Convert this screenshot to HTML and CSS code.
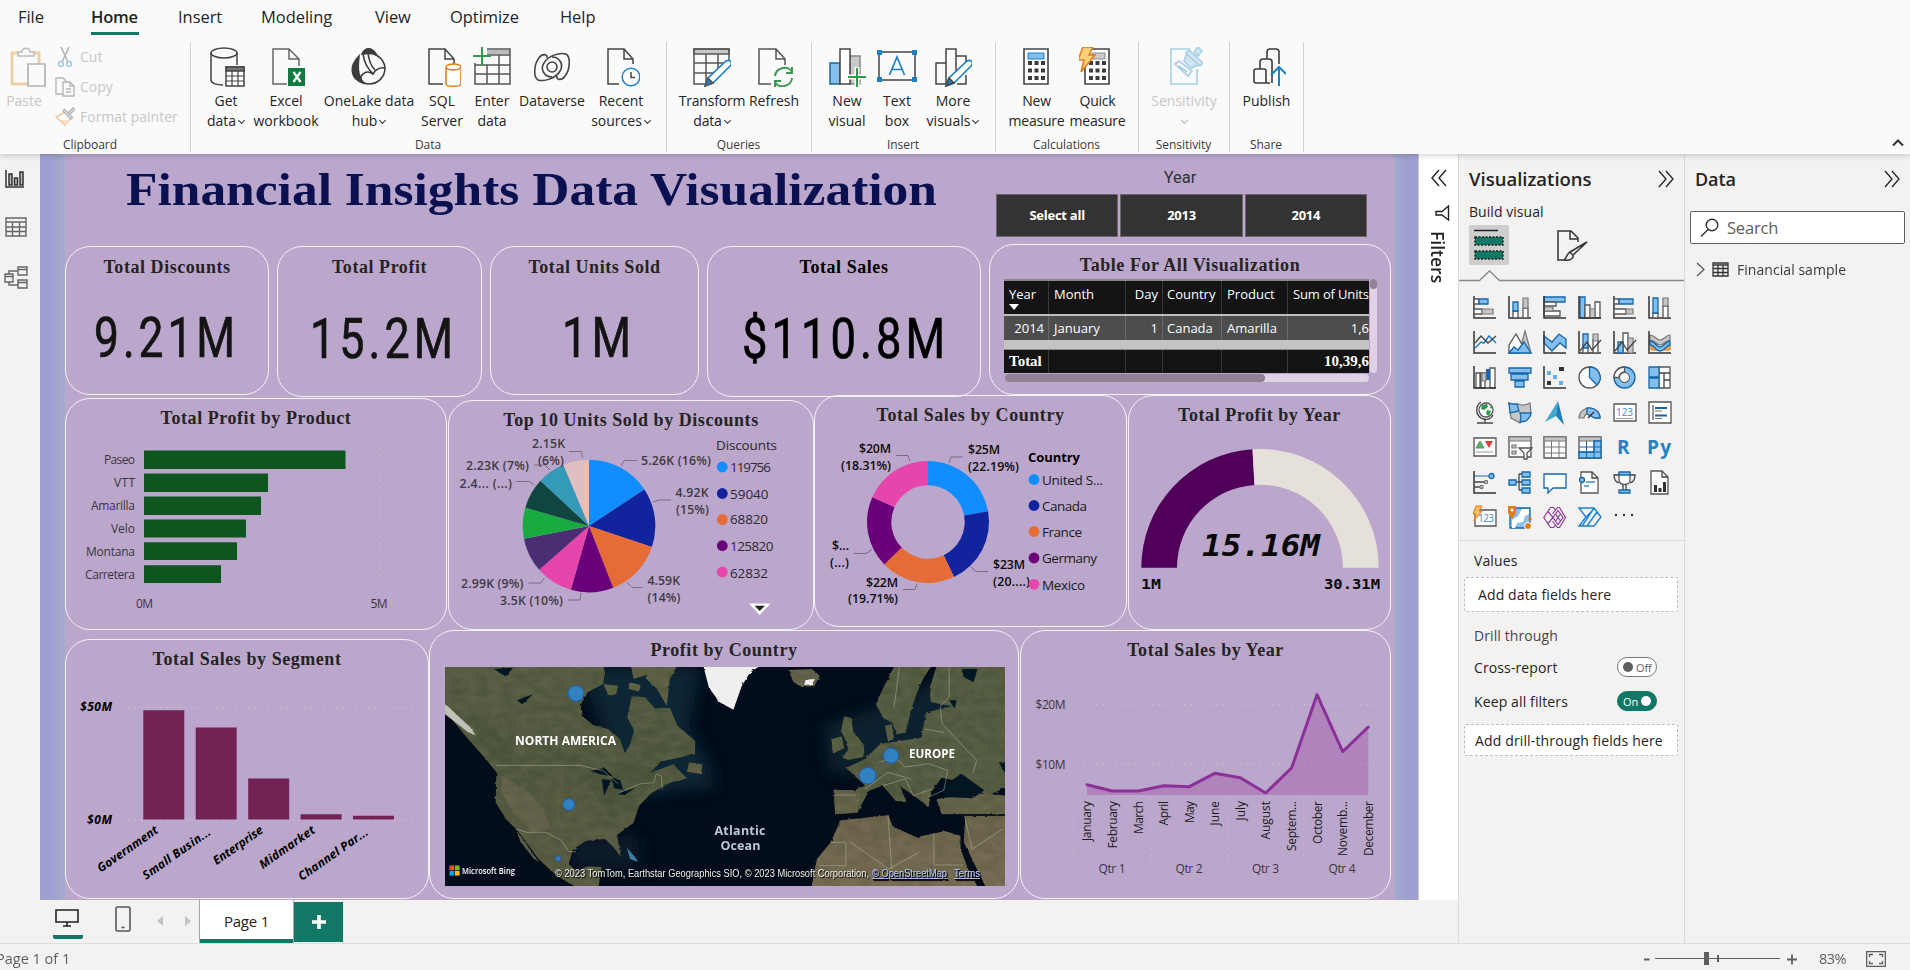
FILE: index.html
```html
<!DOCTYPE html>
<html lang="en">
<head>
<meta charset="utf-8">
<title>Financial Insights</title>
<link rel="stylesheet" href="styles.css">
</head>
<body>
<div class="app">
  <header class="ribbon">
    <nav class="tabs">
      <a class="tab t-file">File</a><a class="tab t-home on">Home</a><a class="tab t-insert">Insert</a><a class="tab t-model">Modeling</a><a class="tab t-view">View</a><a class="tab t-opt">Optimize</a><a class="tab t-help">Help</a>
    </nav>
    <div class="groups">
      <section class="group g-clip">
        <div class="tools clip">
          <div class="btn w-paste off"><svg class="ic" width="38" height="40" viewBox="0 0 38 40" fill="none"><path d="M4 6h27v31H4z" stroke="#efcfa6" stroke-width="3"/><path d="M10 9V5h4c0-5 8-5 8 0h4v4z" fill="#fafafa" stroke="#bdbdbd" stroke-width="1.6"/><path d="M20 17h17v22H20z" fill="#fafafa" stroke="#b4b4b4" stroke-width="1.7"/></svg><span>Paste</span></div>
          <div class="minis off">
            <div class="mini"><svg width="20" height="20" viewBox="0 0 20 20" fill="none"><path d="M6 0l7 15M14 0L7 15" stroke="#b4b4b4" stroke-width="1.6"/><circle cx="6" cy="17" r="2.4" stroke="#9cc9e4" stroke-width="1.5"/><circle cx="14" cy="17" r="2.4" stroke="#9cc9e4" stroke-width="1.5"/></svg><span>Cut</span></div>
            <div class="mini"><svg width="20" height="20" viewBox="0 0 20 20" fill="none" stroke="#b4b4b4" stroke-width="1.3"><path d="M8 17H1V1h7l3 3"/><path d="M8 5h7l4 4v10H8z" fill="#fafafa"/><path d="M15 5v4h4M11 12h5M11 15h5"/></svg><span>Copy</span></div>
            <div class="mini"><svg width="20" height="20" viewBox="0 0 20 20" fill="none"><path d="M1 10l9 8 6-7-6-6z" stroke="#efc9a0" stroke-width="1.6"/><path d="M6 13l5 5 4-5z" fill="#f8dfc0"/><path d="M8 4l8 8 1.500-1.500L9.500 2.500zM13 6l5-5 1.500 1.500-5 5" stroke="#b0b0b0" stroke-width="1.3" fill="#fafafa"/></svg><span class="fp">Format painter</span></div>
          </div>
        </div>
        <div class="gl">Clipboard</div>
      </section>
      <section class="group g-data">
        <div class="tools">
          <div class="btn w52"><svg class="ic" width="38" height="40" viewBox="0 0 38 40" fill="none" stroke="#444" stroke-width="1.5"><ellipse cx="17" cy="6" rx="13" ry="5"/><path d="M4 6v27c0 3 5 5 12 5M30 6v12"/><path d="M19 20h18v19H19z" fill="#fff"/><path d="M19 20h18v4H19z" fill="#777"/><path d="M19 29h18M19 34h18M25 24v15M31 24v15" stroke-width="1.200"/></svg><span>Get<br>data<i class="dn"></i></span></div>
          <div class="btn w68"><svg class="ic" width="38" height="40" viewBox="0 0 38 40" fill="none" stroke="#666" stroke-width="1.5"><path d="M20 37H6V2h16l10 10v7M22 2v10h10"/><path d="M21 21h17v18H21z" fill="#107c41" stroke="none"/><path d="M26.500 25l7 10M33.500 25l-7 10" stroke="#fff" stroke-width="2.200"/></svg><span>Excel<br>workbook</span></div>
          <div class="btn w98"><svg class="ic" width="38" height="40" viewBox="0 0 38 40" fill="none" stroke="#3c3c3c" stroke-width="1.600"><path d="M9 9C-1 19 0 32 13 36c-6-9-5-18-4-27z" fill="#3c3c3c"/><path d="M12 7c3-7 10-7 14 0-4-1-9-1-14 0z" fill="#3c3c3c"/><path d="M13 7c10-3 21 3 22 14M13 7c1 8 4 14 10 20 3-5 7-7 12-6 0 9-7 16-16 16-8 0-10-7-6-10 3-3 7-2 10 0M18 6c1 9 5 15 7 17"/></svg><span>OneLake data<br>hub<i class="dn"></i></span></div>
          <div class="btn w48"><svg class="ic" width="38" height="40" viewBox="0 0 38 40" fill="none" stroke="#444" stroke-width="1.500"><path d="M20 37H6V2h16l9 10v5M22 2v10h9"/><path d="M23 21v16c0 3 15 3 15 0V21" fill="#fff" stroke="#e07b1a"/><ellipse cx="30.500" cy="20" rx="7.500" ry="3" fill="#fff" stroke="#e07b1a"/></svg><span>SQL<br>Server</span></div>
          <div class="btn w52"><svg class="ic" width="38" height="40" viewBox="0 0 38 40" fill="none" stroke="#555" stroke-width="1.500"><path d="M14 3h23v4H14z" fill="#bbb" stroke="none"/><path d="M14 2h23v35H2V16M2 18h35M2 27h35M14 18v19M26 8v29M14 8h23"/><path d="M9 0v19M0 9h18" stroke="#2f9a49" stroke-width="2"/></svg><span>Enter<br>data</span></div>
          <div class="btn w68"><svg class="ic" width="38" height="40" viewBox="0 0 38 40" fill="none" stroke="#444" stroke-width="1.600"><circle cx="19" cy="20" r="5"/><path d="M19 30c-8 0-12-8-8-14C15 9 26 5 33 7c5 3 4 16-1 22-3 5-9 4-8 0M19 10c8 0 12 8 8 14C23 31 12 35 5 33 0 30 1 17 6 11c3-5 9-4 8 0"/></svg><span>Dataverse</span></div>
          <div class="btn w70"><svg class="ic" width="38" height="40" viewBox="0 0 38 40" fill="none" stroke="#444" stroke-width="1.500"><path d="M17 37H6V2h16l9 10v5M22 2v10h9"/><circle cx="29" cy="30" r="8.800" fill="#fff" stroke="#1f82cc"/><path d="M29 25v5.500h4"/></svg><span>Recent<br>sources<i class="dn"></i></span></div>
        </div>
        <div class="gl">Data</div>
      </section>
      <section class="group g-query">
        <div class="tools">
          <div class="btn w66"><svg class="ic" width="38" height="40" viewBox="0 0 38 40" fill="none" stroke="#555" stroke-width="1.500"><path d="M1 2h35v5H1z" fill="#c8c8c8"/><path d="M14 37H1V2h35v11M1 16h30M1 26h22M13 7v30M25 7v14"/><path d="M12 39l3-8 18-17c4-2 7 2 4 5L20 36z" fill="#fff" stroke="#1b80c8" stroke-width="1.600"/><path d="M12 39l3-8 5 5z" fill="#1b80c8"/></svg><span>Transform<br>data<i class="dn"></i></span></div>
          <div class="btn w58"><svg class="ic" width="38" height="40" viewBox="0 0 38 40" fill="none" stroke="#555" stroke-width="1.500"><path d="M16 37H4V2h17l9 10v6M21 2v10h9"/><path d="M20 29c1-9 14-11 17-4M37 20v6h-6M37 31c-1 9-14 11-17 4M20 40v-6h6" stroke="#3a9a52" stroke-width="2"/></svg><span>Refresh</span></div>
        </div>
        <div class="gl">Queries</div>
      </section>
      <section class="group g-insert">
        <div class="tools">
          <div class="btn w50"><svg class="ic wide" width="38" height="40" viewBox="0 0 38 40" fill="none" stroke="#444" stroke-width="1.500"><path d="M22 9h10v28H22z" fill="#c8c8c8" stroke="#888"/><path d="M2 16h10v21H2z" fill="#83beec" stroke="#1668ad"/><path d="M12 2h10v35H12z" fill="#fff"/><path d="M29 20v20M20 30h18" stroke="#fafafa" stroke-width="5"/><path d="M29 21v19M20 30h18" stroke="#2f9a49" stroke-width="2"/></svg><span>New<br>visual</span></div>
          <div class="btn w50"><svg class="ic" width="40" height="40" viewBox="0 0 40 40" fill="none"><path d="M2 5h36v28H2z" stroke="#444" stroke-width="1.500"/><path d="M0 3h5v5H0zM35 3h5v5h-5zM0 30h5v5H0zM35 30h5v5h-5z" fill="#1b80c8"/><path d="M12.500 28L20 10l7.500 18M15 22.500h10" stroke="#1b80c8" stroke-width="1.700"/></svg><span>Text<br>box</span></div>
          <div class="btn w62"><svg class="ic" width="38" height="40" viewBox="0 0 38 40" fill="none" stroke="#444" stroke-width="1.500"><path d="M12 37H2V16h10M12 37V2h10v22M22 9h10v6M32 28v9h-9"/><path d="M12 39l3-8 18-17c4-2 7 2 4 5L20 36z" fill="#fff" stroke="#1b80c8" stroke-width="1.600"/><path d="M12 39l3-8 5 5z" fill="#1b80c8"/></svg><span>More<br>visuals<i class="dn"></i></span></div>
        </div>
        <div class="gl">Insert</div>
      </section>
      <section class="group g-calc">
        <div class="tools">
          <div class="btn w61"><svg class="ic" width="38" height="40" viewBox="0 0 38 40" fill="none"><path d="M6 2h24v35H6z" fill="#fff" stroke="#444" stroke-width="1.600"/><path d="M10 6h16v6H10z" fill="#83beec" stroke="#1b80c8"/><path d="M10 16h17M10 23.500h17M10 31h17" stroke="#3c3c3c" stroke-width="3.800" stroke-dasharray="4 2.500"/></svg><span>New<br>measure</span></div>
          <div class="btn w61"><svg class="ic" width="38" height="40" viewBox="0 0 38 40" fill="none"><path d="M6 2h24v35H6z" fill="#fff" stroke="#444" stroke-width="1.600"/><path d="M13 6h13v6H13z" fill="#ccc" stroke="#888"/><path d="M10 16h17M10 23.500h17M10 31h17" stroke="#3c3c3c" stroke-width="3.800" stroke-dasharray="4 2.500"/><path d="M4 0h10l-4 8h6L2 25l3-12H-1z" fill="#fcd07b" stroke="#e07b1a" stroke-width="1.500"/></svg><span>Quick<br>measure</span></div>
        </div>
        <div class="gl">Calculations</div>
      </section>
      <section class="group g-sens">
        <div class="tools">
          <div class="btn w74 off"><svg class="ic" width="38" height="40" viewBox="0 0 38 40" fill="none" stroke="#a8cfe6" stroke-width="1.600"><path d="M25 2H6v35h26V22"/><path d="M24 3l14 13-3 3L21 6zM33 0l4 4-4 5-4-4zM22 6l-3 8 7 7 8-3" fill="#cfe5f2"/><path d="M10 17l4-3 13 10-4 5zM14 19l8 6"/></svg><span>Sensitivity<br><i class="dn lone"></i></span></div>
        </div>
        <div class="gl">Sensitivity</div>
      </section>
      <section class="group g-share">
        <div class="tools">
          <div class="btn w74"><svg class="ic" width="38" height="40" viewBox="0 0 38 40" fill="none" stroke="#3c3c3c" stroke-width="1.600"><path d="M22 36H8c-1 0-2-1-2-2V24c0-1 1-2 2-2h8c1 0 2 1 2 2v12M12 22v-7c0-2 1-3 3-3h6c2 0 3 1 3 3v21M19 12V5c0-2 1-3 3-3h6c2 0 3 1 3 3v12"/><path d="M31 39V20M23 28l8-8 7 7" stroke="#1b80c8" stroke-width="2"/></svg><span>Publish</span></div>
        </div>
        <div class="gl">Share</div>
      </section>
      <div class="collapse"><svg width="12" height="8" viewBox="0 0 12 8" fill="none" stroke="#333" stroke-width="2"><path d="M1 6.500L6 1.500l5 5"/></svg></div>
    </div>
  </header>

  <div class="main">
    <div class="left">
      <div class="workrow">
        <aside class="rail">
          <svg width="20" height="18" viewBox="0 0 20 18" fill="none" stroke="#333" stroke-width="1.500"><path d="M1 0v17h18"/><path d="M4 15V4h3v11zM9.500 15V8h3v7zM15 15V2h3v13z" fill="#bbb"/></svg>
          <svg width="22" height="20" viewBox="0 0 22 20" fill="none" stroke="#666" stroke-width="1.400"><path d="M1 1h20v18H1zM1 5h20M1 10h20M1 14.500h20M7.500 5v14M14.500 5v14"/></svg>
          <svg width="24" height="24" viewBox="0 0 24 24" fill="none" stroke="#666" stroke-width="1.400"><path d="M14 1h9v8h-9zM14 3.500h9M1 8h8v8H1zM1 10.500h8M14 14h9v8h-9zM14 16.500h9M5 8V5h9M5 16v3h9"/></svg>
        </aside>
        <main class="canvas">
          <div class="head">
            <svg class="title" width="830" height="64" viewBox="120 158 830 64"><text class="ttl" x="126" y="205" textLength="811" lengthAdjust="spacingAndGlyphs">Financial Insights Data Visualization</text></svg>
            <div class="slicer"><div class="sl-h">Year</div><div class="sl-b"><b>Select all</b><b>2013</b><b>2014</b></div></div>
          </div>
          <div class="row row1">
            <section class="card c1"><h3>Total Discounts</h3><svg width="202" height="100" viewBox="66 279 202 100"><text class="big" x="94" y="357" textLength="145" lengthAdjust="spacingAndGlyphs">9.21M</text></svg></section>
            <section class="card c2"><h3>Total Profit</h3><svg width="203" height="100" viewBox="278 279 203 100"><text class="big" x="310" y="358" textLength="147" lengthAdjust="spacingAndGlyphs">15.2M</text></svg></section>
            <section class="card c3"><h3>Total Units Sold</h3><svg width="207" height="100" viewBox="491 279 207 100"><text class="big" x="562" y="357" textLength="73" lengthAdjust="spacingAndGlyphs">1M</text></svg></section>
            <section class="card c4"><h3 class="blk">Total Sales</h3><svg width="272" height="100" viewBox="708 279 272 100"><text class="big blk" x="742" y="358" textLength="207" lengthAdjust="spacingAndGlyphs">$110.8M</text></svg></section>
            <section class="card c5"><h3>Table For All Visualization</h3>
              <div class="tblwrap">
                <div class="tbl">
                  <div class="tr th"><span>Year<i class="sort"></i></span><span>Month</span><span class="r">Day</span><span>Country</span><span>Product</span><span class="nb">Sum of Units</span></div>
                  <div class="tr td"><span class="r">2014</span><span>January</span><span class="r">1</span><span>Canada</span><span>Amarilla</span><span class="cut">1,6</span></div>
                  <div class="gap"></div>
                  <div class="tr tt"><span>Total</span><span></span><span></span><span></span><span></span><span class="cut">10,39,6</span></div>
                </div>
                <div class="vbar"><i></i></div>
              </div>
              <div class="hbar"><i></i></div>
            </section>
          </div>
          <div class="row row2">
            <section class="card d1"><h3>Total Profit by Product</h3>
              <svg width="380" height="196" viewBox="66 431 380 196" class="ax">
                <path class="grid" d="M144.500 442V594M379.500 442V594"/>
                <g fill="#0f5520"><path d="M144 450.500h201.500V469H144zM144 473.500h124V492H144zM144 496.500h117V515H144zM144 519.500h102V537.500H144zM144 542.300h93V560H144zM144 565.200h77V583H144z"/></g>
                <g text-anchor="end"><text x="135" y="464" textLength="31">Paseo</text><text x="135" y="487" textLength="21">VTT</text><text x="135" y="510" textLength="44">Amarilla</text><text x="135" y="533" textLength="24">Velo</text><text x="135" y="555.500" textLength="49">Montana</text><text x="135" y="578.500" textLength="50">Carretera</text></g>
                <g text-anchor="middle"><text x="144.500" y="608" textLength="17">0M</text><text x="379" y="608" textLength="17">5M</text></g>
              </svg></section>
            <section class="card d2"><h3>Top 10 Units Sold by Discounts</h3>
              <svg width="364" height="194" viewBox="449 434 364 194" class="pl">
                <path fill="#118dff" d="M589 527V460.700A66.300 66.300 0 0 1 644.400 490.500z"/><path fill="#12239e" d="M589 527L644.400 490.500A66.300 66.300 0 0 1 651.900 548z"/><path fill="#e66c37" d="M589 527L651.900 548A66.300 66.300 0 0 1 613.200 588.700z"/><path fill="#6b007b" d="M589 527L613.200 588.700A66.300 66.300 0 0 1 570.800 590.800z"/><path fill="#e645ab" d="M589 527L570.800 590.800A66.300 66.300 0 0 1 539.200 570.800z"/><path fill="#4b2d73" d="M589 527L539.200 570.800A66.300 66.300 0 0 1 523.900 539.700z"/><path fill="#1aab40" d="M589 527L523.900 539.700A66.300 66.300 0 0 1 525.300 508.600z"/><path fill="#114540" d="M589 527L525.300 508.600A66.300 66.300 0 0 1 540.500 481.800z"/><path fill="#3599b8" d="M589 527L540.500 481.800A66.300 66.300 0 0 1 563.400 465.800z"/><path fill="#dfbfbf" d="M589 527L563.400 465.800A66.300 66.300 0 0 1 589 460.700z"/>
                <path class="lead" d="M569 452.500h12.500l1 6M534 466h11l5 5M516.500 482.500h13l4.500 3.500M528.500 584h12l4-5M568 601h12l1-7M637 461.500h-13l-3 5.500M671 501h-12l-6 2M643 588.500h-11l-5-5"/>
                <text x="532" y="449" textLength="33">2.15K</text><text x="538" y="466" textLength="26">(6%)</text><text x="466" y="471" textLength="63">2.23K (7%)</text><text x="459.500" y="488.500" textLength="52.500">2.4... (...)</text><text x="461" y="589" textLength="62.500">2.99K (9%)</text><text x="500" y="606" textLength="63">3.5K (10%)</text><text x="641" y="466" textLength="70">5.26K (16%)</text><text x="675.500" y="498" textLength="33">4.92K</text><text x="676" y="514.500" textLength="33">(15%)</text><text x="647.500" y="586" textLength="32.500">4.59K</text><text x="647.500" y="602.500" textLength="33">(14%)</text>
                <circle cx="722.300" cy="468" r="5.400" fill="#118dff"/><circle cx="722.300" cy="494.500" r="5.400" fill="#12239e"/><circle cx="722.300" cy="520.500" r="5.400" fill="#e66c37"/><circle cx="722.300" cy="546.700" r="5.400" fill="#6b007b"/><circle cx="722.300" cy="573" r="5.400" fill="#e645ab"/>
                <g class="lg"><text x="716" y="451" textLength="61">Discounts</text><text x="730" y="473" textLength="41">119756</text><text x="730" y="500" textLength="38.500">59040</text><text x="730" y="525" textLength="38">68820</text><text x="730" y="552" textLength="43.500">125820</text><text x="730" y="579" textLength="38">62832</text></g>
                <path d="M749 604.500h21.500L759.700 616z" fill="#fff"/><path d="M754.500 606.700h10.500L759.700 612z" fill="#222"/>
              </svg></section>
            <section class="card d3"><h3>Total Sales by Country</h3>
              <svg width="311" height="196" viewBox="815 429 311 196" class="pl dk">
                <path fill="#118dff" d="M928 462A61 61 0 0 1 988.100 512.300L964.100 516.600A36.700 36.700 0 0 0 928 486.300z"/><path fill="#12239e" d="M988.100 512.300A61 61 0 0 1 954 578.100L943.700 556.200A36.700 36.700 0 0 0 964.100 516.600z"/><path fill="#e66c37" d="M954 578.100A61 61 0 0 1 884.300 565.500L901.700 548.600A36.700 36.700 0 0 0 943.700 556.200z"/><path fill="#6b007b" d="M884.300 565.500A61 61 0 0 1 872.300 498.200L894.500 508.100A36.700 36.700 0 0 0 901.700 548.600z"/><path fill="#e645ab" d="M872.300 498.200A61 61 0 0 1 928 462L928 486.300A36.700 36.700 0 0 0 894.500 508.100z"/>
                <path class="lead" d="M896 456.500h12l2 6M963 458h-12l-2 6M854 554.500h12l6-4M903 590.500h12l2-6M988 572.500h-12l-5-4.500"/>
                <text x="859" y="454" textLength="32">$20M</text><text x="841" y="470.500" textLength="50">(18.31%)</text><text x="968" y="455" textLength="32">$25M</text><text x="968" y="472" textLength="51">(22.19%)</text><text x="832" y="551" textLength="17">$...</text><text x="830" y="568" textLength="19">(...)</text><text x="866" y="588" textLength="32">$22M</text><text x="848" y="604" textLength="50">(19.71%)</text><text x="993" y="570" textLength="32">$23M</text><text x="993" y="586.500" textLength="37">(20....)</text>
                <circle cx="1034" cy="480.500" r="5.400" fill="#118dff"/><circle cx="1034" cy="506.500" r="5.400" fill="#12239e"/><circle cx="1034" cy="532.500" r="5.400" fill="#e66c37"/><circle cx="1034" cy="559" r="5.400" fill="#6b007b"/><circle cx="1034" cy="585.300" r="5.400" fill="#e645ab"/>
                <g class="lg"><text class="b" x="1028" y="463" textLength="52">Country</text><text x="1042" y="486" textLength="61">United S...</text><text x="1042" y="512" textLength="45">Canada</text><text x="1042" y="538" textLength="40">France</text><text x="1042" y="564" textLength="55">Germany</text><text x="1042" y="591" textLength="43">Mexico</text></g>
              </svg></section>
            <section class="card d4"><h3>Total Profit by Year</h3>
              <svg width="261" height="198" viewBox="1129 429 261 198" class="mono">
                <path fill="#500058" d="M1141.300 568.700A118.700 118.700 0 0 1 1252.500 450.200L1254.500 485.900A83 83 0 0 0 1177 568.700z"/><path fill="#e6e0da" d="M1252.500 450.200A118.700 118.700 0 0 1 1378.700 568.700H1343A83 83 0 0 0 1254.500 485.900z"/>
                <text class="val" x="1202" y="557" textLength="118" lengthAdjust="spacingAndGlyphs">15.16M</text><text x="1141" y="590" textLength="20" lengthAdjust="spacingAndGlyphs">1M</text><text x="1324" y="590" textLength="56" lengthAdjust="spacingAndGlyphs">30.31M</text>
              </svg></section>
          </div>
          <div class="row row3">
            <section class="card e1"><h3>Total Sales by Segment</h3>
              <svg width="362" height="224" viewBox="66 672 362 224" class="seg">
                <path class="grid" d="M122 707.500H418M122 820H418"/>
                <path fill="#732256" d="M143.300 710.300h41V819.500h-41zM195.700 727.500h41V819.500h-41zM248.200 778.500h41V819.500h-41zM300.600 814.200h41V819.500h-41zM353 815.700h41V819.500h-41z"/>
                <text x="80" y="711" textLength="32">$50M</text><text x="87" y="824" textLength="25">$0M</text>
                <g text-anchor="end"><text transform="translate(159 832) rotate(-35)" textLength="71">Government</text><text transform="translate(211.500 834) rotate(-35)" textLength="80">Small Busin...</text><text transform="translate(264 832) rotate(-35)" textLength="58">Enterprise</text><text transform="translate(316 832) rotate(-35)" textLength="65">Midmarket</text><text transform="translate(369 834) rotate(-35)" textLength="82">Channel Par...</text></g>
              </svg></section>
            <section class="card e2"><h3>Profit by Country</h3>
              <svg class="map" width="560" height="219" viewBox="445 668 560 219">
                <defs>
                  <filter id="tex" x="0" y="0" width="100%" height="100%" color-interpolation-filters="sRGB"><feTurbulence type="fractalNoise" baseFrequency=".03 .04" numOctaves="6" seed="8" result="n"/><feColorMatrix in="n" type="matrix" values=".22 0 0 0 .23 .17 .04 0 0 .245 .18 0 .04 0 .135 0 0 0 0 1" result="g"/><feComposite in="SourceGraphic" in2="g" operator="arithmetic" k1="0" k2=".6" k3=".42" k4="0" result="c"/><feComposite in="c" in2="SourceGraphic" operator="in"/></filter>
                  <filter id="soft" x="-30%" y="-30%" width="160%" height="160%"><feGaussianBlur stdDeviation="22"/></filter>
                  <filter id="edge" x="-10%" y="-10%" width="120%" height="120%"><feTurbulence type="fractalNoise" baseFrequency=".07" numOctaves="3" seed="2"/><feDisplacementMap in="SourceGraphic" scale="7"/></filter>
                  <linearGradient id="na" x1="0" y1="0" x2=".15" y2="1"><stop offset="0" stop-color="#545a45"/><stop offset=".5" stop-color="#4a553b"/><stop offset="1" stop-color="#555a42"/></linearGradient>
                  <linearGradient id="af" x1="0" y1="0" x2="0" y2="1"><stop offset="0" stop-color="#736650"/><stop offset="1" stop-color="#84735c"/></linearGradient>
                </defs>
                <svg x="445" y="668" width="560" height="219" viewBox="52 114 1464 657" preserveAspectRatio="none">
                  <rect x="52" y="114" width="1464" height="657" fill="#020c1a"/>
                  <g fill="#0b2634" filter="url(#soft)"><path d="M400 114H720L690 300 740 400 760 480 690 480 560 500 500 400z"/><path d="M1040 290L1230 220 1400 114 1450 250 1250 400 1060 440z" opacity=".8"/><path d="M380 620h180v100H380z" opacity=".6"/></g>
                  <g filter="url(#edge)"><g filter="url(#tex)">
                    <path fill="url(#na)" d="M40 100H472L466 165 425 190 408 225 412 262 440 288 478 300 510 330 522 372 536 345 546 305 528 265 540 200 575 205 600 238 640 236 660 290 706 335 706 372 670 385 615 398 588 432 650 404 660 420 685 448 640 462 592 492 560 530 545 582 502 618 512 684 490 652 470 630 420 636 386 662 376 706 396 726 426 712 462 714 452 785H410L345 742 296 690 240 602 212 572 184 520 186 430 160 392 112 330 40 230z"/>
                    <path fill="#5c5f43" d="M236 600L262 640 298 700 284 690 250 640zM535 100H600L592 134 545 150zM585 100H664L640 150 632 232 606 180 578 150zM466 165L505 170 500 195 480 202zM690 400L725 405 722 436 684 428zM535 160l30 8-6 20-28-8z"/>
                    <path fill="#66624f" d="M950 122L1012 120 1032 140 1018 172 984 174 962 158z"/>
                    <path fill="#4f5a3c" d="M1095 262l20 5 4 40 28 40 2 36-42 10-16-6 16-30-6-20-14-30zM1062 330l28-8 6 36-30 16z"/>
                    <path fill="#4e5940" d="M1232 100H1330L1302 150 1290 180 1274 232 1256 312 1232 316 1222 282 1198 268 1178 226 1200 170zM1202 290l18-6 6 42-16 14zM1340 100H1530V470L1470 500 1410 462 1350 446 1330 480 1300 520 1240 470 1260 520 1230 516 1196 470 1160 486 1130 552 1072 556 1068 482 1120 484 1150 470 1100 416 1150 390 1190 344 1296 326 1310 250 1376 232 1322 220 1318 180z"/>
                    <path fill="#66644c" d="M1296 486l28 0-8 50-16-18zM1336 510L1440 492 1530 500V556L1350 556zM1068 484h70l-8 66-58 6z"/>
                    <path fill="url(#af)" d="M1086 574L1212 558 1222 592 1284 624 1360 606 1400 620 1400 660 1420 720 1450 785H1008L1024 690 1060 640zM1412 560H1530V785H1470L1408 640z"/>
                    <path fill="#7a6b58" opacity=".6" d="M200 440l60 40 50 60 20 60-50 10-50-60-30-60z"/>
                    <path fill="#3a4a35" opacity=".45" d="M120 250l60 40 40 70 10 50-40-10-50-70zM400 430l180-20 40 20-90 120-40 20-40-60z"/>
                  </g>
                  <path d="M725 100H890L850 130 828 170 806 242 770 220 742 176z" fill="#f1efee"/><path d="M40 215l22 20 22 24 34 36 14 24-20-10-34-30-38-34z" fill="#dcdcd5" opacity=".8"/><path d="M995 152l24-2-8 16-20 2z" fill="#eee"/>
                  <path fill="#061520" d="M430 425l40-8 22 26-46-10zM462 450l24 4-18 46zM486 446l24 8 8 28-24-4zM496 494l34-10 20-8-28 22zM180 120l50-4-20 26zM240 214l42-18-28 30zM1352 474l50-40 60 50-30 24-76-4zM1404 120h40l-10 40-26-16zM1500 400h20v40zM1370 214l20 0-6 24z"/></g>
                  <g fill="none" stroke="#b9bda6" stroke-width="2.200" opacity=".6"><path d="M186 409H405l60 16 40 40M500 495l60-30 38-4 6-26 14 6 2 40M236 600l30 10 50 0 40 24 20 34h18M1186 400l40-16 30 30 60-10 50 20-10 60-40 20M1240 114l-14 120M1370 114v90l-24 30 6 50 40 50 50 60-10 40M1306 300l50 10M1066 498h60M1196 470l60-20 20 50 50-20M1112 640l100 80 80-50M1210 560l10 160M1330 612v96h76M1060 640h40v70h-70M1410 560l20 100 80-60M1150 480l60-50 60 20"/></g>
                </svg>
                <g fill="#2f87d0" fill-opacity=".88" stroke="#1c5fbf" stroke-width="1"><circle cx="576" cy="694.500" r="7.800"/><circle cx="568.800" cy="805.500" r="5.800"/><circle cx="558.300" cy="859.600" r="2.500"/><circle cx="891" cy="756.700" r="7.500"/><circle cx="867.600" cy="776.700" r="8.300"/></g>
                <path fill="#4fa8d8" opacity=".7" d="M627 849l8 9 3 5-8-3z"/>
                <g class="mp"><text x="515" y="746" textLength="101" lengthAdjust="spacingAndGlyphs">NORTH AMERICA</text><text x="909" y="759" textLength="46" lengthAdjust="spacingAndGlyphs">EUROPE</text><g class="oc"><text x="714.500" y="836" textLength="51">Atlantic</text><text x="720.500" y="851" textLength="40">Ocean</text></g></g>
                <path fill="#f25022" d="M449.500 866.500h4.700v4.700h-4.700z"/><path fill="#7fba00" d="M454.900 866.500h4.700v4.700h-4.700z"/><path fill="#00a4ef" d="M449.500 871.900h4.700v4.700h-4.700z"/><path fill="#ffb900" d="M454.900 871.900h4.700v4.700h-4.700z"/>
                <text class="bing" x="462" y="875" textLength="53" lengthAdjust="spacingAndGlyphs">Microsoft Bing</text>
                <g class="cr"><text x="555" y="878" textLength="314" lengthAdjust="spacingAndGlyphs">© 2023 TomTom, Earthstar Geographics SIO, © 2023 Microsoft Corporation,</text><text class="lk" x="872" y="878" textLength="75" lengthAdjust="spacingAndGlyphs">© OpenStreetMap</text><text class="lk" x="954" y="878" textLength="26" lengthAdjust="spacingAndGlyphs">Terms</text></g>
              </svg></section>
            <section class="card e3"><h3>Total Sales by Year</h3>
              <svg width="369" height="234" viewBox="1021 664 369 234" class="ax">
                <path class="grid" d="M1077 705.500H1377M1077 765.500H1377M1074 799V881M1150.700 799V881M1227.500 799V881M1304 799V881"/>
                <path fill="#993399" fill-opacity=".3" d="M1087 785.700L1112.300 792H1138.300L1164 786.700 1189.300 787.700 1214.700 774.300 1240.300 778.700 1265.700 794 1291.700 768.700 1317 695.700 1342.700 752.700 1368.300 728V796H1087z"/>
                <path fill="none" stroke="#8b3096" stroke-width="3" stroke-linejoin="round" stroke-linecap="round" d="M1087 785.700L1112.300 792H1138.300L1164 786.700 1189.300 787.700 1214.700 774.300 1240.300 778.700 1265.700 794 1291.700 768.700 1317 695.700 1342.700 752.700 1368.300 728"/>
                <text x="1035.500" y="710" textLength="30">$20M</text><text x="1035.500" y="770" textLength="30">$10M</text>
                <g text-anchor="end" class="mo"><text transform="translate(1091 802) rotate(-90)" textLength="40">January</text><text transform="translate(1117 802) rotate(-90)" textLength="47.500">February</text><text transform="translate(1142.500 802) rotate(-90)" textLength="33">March</text><text transform="translate(1168 802) rotate(-90)" textLength="24.500">April</text><text transform="translate(1193.500 802) rotate(-90)" textLength="22">May</text><text transform="translate(1219 802) rotate(-90)" textLength="24.500">June</text><text transform="translate(1244.500 802) rotate(-90)" textLength="19.500">July</text><text transform="translate(1270 802) rotate(-90)" textLength="38.500">August</text><text transform="translate(1296 802) rotate(-90)" textLength="50">Septem...</text><text transform="translate(1321.500 802) rotate(-90)" textLength="43">October</text><text transform="translate(1347 802) rotate(-90)" textLength="55">Novemb...</text><text transform="translate(1372.500 802) rotate(-90)" textLength="55">December</text></g>
                <g text-anchor="middle"><text x="1112" y="874" textLength="27">Qtr 1</text><text x="1189" y="874" textLength="27">Qtr 2</text><text x="1265.500" y="874" textLength="27">Qtr 3</text><text x="1342" y="874" textLength="27">Qtr 4</text></g>
              </svg></section>
          </div>
        </main>
        <aside class="filters">
          <svg width="16" height="18" viewBox="0 0 16 18" fill="none" stroke="#222" stroke-width="1.400"><path d="M8 1L1 9l7 8M15 1L8 9l7 8"/></svg>
          <svg class="fn" width="15" height="16" viewBox="0 0 15 16" fill="none" stroke="#222" stroke-width="1.400"><path d="M13.500 1v14L7 10H1V6.500h6z"/></svg>
          <span>Filters</span>
        </aside>
      </div>
      <footer class="pages">
        <div class="dev on"><svg width="24" height="18" viewBox="0 0 24 18" fill="none" stroke="#222" stroke-width="1.600"><path d="M1 1h22v12H1zM12 13v4M8 17h8"/></svg></div>
        <div class="phone"><svg width="16" height="26" viewBox="0 0 16 26" fill="none" stroke="#555" stroke-width="1.600"><rect x="1" y="1" width="14" height="24" rx="1.500"/><path d="M6.500 21.500h3"/></svg></div>
        <div class="arrows"><svg width="36" height="12" viewBox="0 0 36 12" fill="#c3c2c1"><path d="M7 1v10L1 6zM29 1v10l6-5z"/></svg></div>
        <div class="ptab">Page 1</div>
        <div class="padd"><svg width="14" height="14" viewBox="0 0 14 14" stroke="#fff" stroke-width="3.600"><path d="M7 0v14M0 7h14"/></svg></div>
      </footer>
    </div>
    <aside class="viz">
      <div class="ph"><span class="tv">Visualizations</span><svg width="16" height="18" viewBox="0 0 16 18" fill="none" stroke="#222" stroke-width="1.300"><path d="M1 1l7 8-7 8M8 1l7 8-7 8"/></svg></div>
      <div class="bv">Build visual</div>
      <div class="modes">
        <div class="tile"><svg width="30" height="32" viewBox="0 0 30 32"><path d="M0 1.500h24" stroke="#222" stroke-width="1.500"/><path d="M1 8h28v8H1zM1 22h28v8H1z" fill="#117865" stroke="#222" stroke-width="1.500" stroke-dasharray="2 1.500"/></svg></div>
        <svg class="brush" width="32" height="32" viewBox="0 0 32 32" fill="none" stroke="#333" stroke-width="1.500"><path d="M8 30H1V1h13l7 7v4M13 1v8h8M30 12L16 25l-3-3zM14 22c-4 0-4 6-7 8 5 1 10-1 9-5"/></svg>
      </div>
      <svg class="notch" width="225" height="14" viewBox="0 0 225 14" fill="none" stroke="#8a8886" stroke-width="1.300"><path d="M0 11.500h20.500l10-9.500 10 9.500H225"/></svg>
      <div class="icons">
        <svg viewBox="0 0 23 23"><path class="k" d="M1 0v22h22"/><path class="w" d="M1 3h5v5H1zM1 13h8v5H1z"/><path class="bl" d="M6 3h9v5H6z"/><path class="g" d="M9 13h11v5H9z"/></svg>
        <svg viewBox="0 0 23 23"><path class="k" d="M1 0v22h22"/><path class="w" d="M5 15h5v7H5zM15 12h5v10h-5z"/><path class="bl" d="M5 6h5v9H5z"/><path class="g" d="M15 2h5v10h-5z"/></svg>
        <svg viewBox="0 0 23 23"><path class="bl" d="M1 1h21v5H1z"/><path class="w" d="M1 6h12v4H1zM1 15h16v5H1z"/><path class="g" d="M1 11h9v4H1z"/><path class="k" d="M1 0v22h22"/></svg>
        <svg viewBox="0 0 23 23"><path class="bl" d="M2 1h5v21H2z"/><path class="w" d="M7 9h5v13H7zM17 6h5v16h-5z"/><path class="g" d="M12 13h5v9h-5z"/><path class="k" d="M1 0v22h22"/></svg>
        <svg viewBox="0 0 23 23"><path class="k" d="M1 0v22h22"/><path class="w" d="M1 3h5v5H1zM1 13h12v5H1z"/><path class="bl" d="M6 3h14v5H6z"/><path class="g" d="M13 13h7v5h-7z"/></svg>
        <svg viewBox="0 0 23 23"><path class="k" d="M1 0v22h22"/><path class="w" d="M5 17h5v5H5zM15 10h5v12h-5z"/><path class="bl" d="M5 2h5v15H5z"/><path class="g" d="M15 2h5v8h-5z"/></svg>

        <svg viewBox="0 0 23 23"><path class="k" d="M1 0v22h22"/><path class="lb" d="M2 17l6-6 3 1 5-7 7 7"/><path class="lk2" d="M2 12l6-7 7 7 8-7"/></svg>
        <svg viewBox="0 0 23 23"><path class="g" d="M17 0l6 22H11z"/><path class="w" d="M8 3l8 14-4 5H1V14z"/><path class="bl" d="M1 22l5-6 4 3 6-8 7 11z"/></svg>
        <svg viewBox="0 0 23 23"><path class="bl" d="M1 5l8 6 7-8 7 5v9l-6-5-8 8-8-8z"/><path class="k" d="M1 0v22h22"/></svg>
        <svg viewBox="0 0 23 23"><path class="k" d="M1 0v22h22"/><path class="w" d="M5 14h5v8H5zM15 9h5v13h-5z"/><path class="bl" d="M5 3h5v14H5z"/><path class="g" d="M15 3h5v7h-5z"/><path class="lk2" d="M2 20l7-9 5 8 9-10"/></svg>
        <svg viewBox="0 0 23 23"><path class="k" d="M1 0v22h22"/><path class="w" d="M10 2h5v20h-5z"/><path class="bl" d="M5 11h5v11H5z"/><path class="g" d="M15 7h5v15h-5z"/><path class="lk2" d="M2 20l7-9 5 8 9-10"/></svg>
        <svg viewBox="0 0 23 23"><path d="M3 11h6v8H3zM16 12h6v7h-6z" fill="#f5a54a" stroke="#e07b1a"/><path class="g" d="M2 4c5 0 6 5 10 5s6-5 10-5v5c-4 0-6 5-10 5S7 9 2 9z"/><path class="bl" d="M2 10c5 0 6 6 10 6s6-6 10-6v4c-4 0-5 6-10 6S7 14 2 14z"/><path class="k" d="M1 0v22h22"/></svg>

        <svg viewBox="0 0 23 23"><path class="w" d="M3 7h4v15H3zM8 7h4v15H8zM17 2h5v20h-5z"/><path d="M13 3h4v11h-4z" fill="#1565b0"/><path class="g" d="M9 7h4v8H9z"/><path class="k" d="M1 0v22h22"/></svg>
        <svg viewBox="0 0 23 23"><path class="bl" d="M1 2h22v5H1zM3 8h17v6H3zM7 15h9v6H7z"/></svg>
        <svg viewBox="0 0 23 23"><path class="k" d="M1 0v22h22"/><path fill="#6aaee6" d="M4 5h4v4H4zM10 9h4v4h-4zM16 15h4v4h-4z"/><path fill="#333" d="M16 1h5v4h-5zM4 15h4v4H4z"/></svg>
        <svg viewBox="0 0 23 23"><circle class="w" cx="11.500" cy="11.500" r="10.500"/><path class="bl" d="M11.500 1A10.500 10.500 0 0 1 19 19l-7.500-7.500z"/></svg>
        <svg viewBox="0 0 23 23"><circle class="bl" cx="11.500" cy="11.500" r="10.500"/><path class="w" d="M11.500 1A10.500 10.500 0 0 0 1 11.500h5A5.500 5.500 0 0 1 11.500 6z"/><circle cx="11.500" cy="11.500" r="5" fill="#f3f2f1" stroke="#444"/></svg>
        <svg viewBox="0 0 23 23"><path class="w" d="M11 1h11v21H11z"/><path class="bl" d="M1 1h10v10H1zM1 12h10v10H1z"/><path class="lk2" d="M11 7h11M16 7v15M16 14h6"/></svg>

        <svg viewBox="0 0 23 23"><circle class="w" cx="13" cy="9" r="7"/><path d="M9 4l5-1 1 3-4 3-3-1zM14 9l4 1-2 5-3-2zM18 4l2 4-3-1z" fill="#2f9a49"/><path class="lk2" d="M8 1C2 5 2 15 10 18c4 1 8 0 10-4M12 18v4M4 22h16"/></svg>
        <svg viewBox="0 0 23 23"><path class="g" d="M1 2c3 2 6 1 9 1 4 2 8 1 12-1l1 10-5 5-6 5-9-5z"/><path class="bl" d="M1 2c3 2 5 1 8 1l2 7-9 2zM12 12h11c0 4-3 6-5 8l-6 1 1-5z"/></svg>
        <svg viewBox="0 0 23 23"><path d="M15 0L2 21l11-6z" fill="#3fa7d0"/><path d="M15 0l6 24-8-9z" fill="#1d7eb8"/></svg>
        <svg viewBox="0 0 23 23"><path class="g" d="M1 17a10.500 10 0 0 1 21 0h-5a5.500 5 0 0 0-11 0z"/><path class="bl" d="M9 7a11 10 0 0 1 13 10h-5l-8-4z"/><path class="k" d="M10 17l6-6"/></svg>
        <svg viewBox="0 0 23 23"><path class="w" d="M1 3h22v17H1z"/><text x="3" y="14.500" class="n" textLength="17">123</text><path d="M3 17.500h17" stroke="#999"/></svg>
        <svg viewBox="0 0 23 23"><path class="w" d="M1 1h22v21H1z"/><path d="M5 4v15" stroke="#333"/><path d="M7 7h12M7 14.500h12" stroke="#1565b0" stroke-width="2"/><path d="M7 10h7M7 17.500h7" stroke="#777"/></svg>

        <svg viewBox="0 0 23 23"><path class="w" d="M1 2h22v18H1z"/><path d="M7 5l4 7H3z" fill="#5fb06f" stroke="#2f8a44" stroke-width=".8"/><path d="M12 5h8l-4 7z" fill="#d64040"/><path d="M3 16h17" stroke="#999"/></svg>
        <svg viewBox="0 0 23 23"><path class="w" d="M1 1h22v20H1z"/><path class="g" d="M1 1h22v4H1zM4 9h4v3H4zM4 15h4v3H4z"/><path class="w" d="M11 12h13l-5 5v6h-3v-6z"/></svg>
        <svg viewBox="0 0 23 23"><path class="w" d="M1 1h22v21H1z"/><path class="g" d="M1 1h22v4H1z"/><path d="M1 11h22M1 17h22M8.500 5v17M16 5v17" stroke="#777"/></svg>
        <svg viewBox="0 0 23 23"><path class="w" d="M1 1h22v21H1z"/><path class="g" d="M1 1h22v4H1z"/><path class="bl" d="M16 5h7v17H1v-6h15z"/><path d="M1 11h22M1 16h22M8.500 5v17M16 5v17" stroke="#1565b0"/></svg>
        <svg viewBox="0 0 23 23"><text x="4" y="18" class="rp">R</text></svg>
        <svg viewBox="0 0 23 23"><text x="-1" y="18" class="rp" textLength="24">Py</text></svg>

        <svg viewBox="0 0 23 23"><path class="k" d="M1 0v22h22"/><path d="M1 5h15" stroke="#1565b0"/><circle class="bl" cx="18.500" cy="5" r="2.500"/><path class="lk2" d="M1 11h10M1 16h6"/><circle class="g" cx="13" cy="11" r="1.600"/><circle class="g" cx="8.500" cy="16" r="1.600"/></svg>
        <svg viewBox="0 0 23 23"><path class="lk2" d="M8 11h7M11 3v16M11 3h4M11 19h4"/><path class="bl" d="M1 9h7v5H1zM14 1h8v5h-8zM14 9h8v5h-8zM14 17h8v5h-8z"/></svg>
        <svg viewBox="0 0 23 23"><path d="M1 3h22v14H10l-5 5v-5H1z" fill="#fdfdfd" stroke="#1565b0" stroke-width="1.300"/></svg>
        <svg viewBox="0 0 23 23"><path class="w" d="M3 1h11l6 6v15H3z"/><path class="lk2" d="M14 1v6h6"/><circle cx="4" cy="9" r="2.500" class="bl"/><path d="M8 11h9M6 15h5" stroke="#3a8fd0" stroke-width="1.300"/></svg>
        <svg viewBox="0 0 23 23"><path class="w" d="M6 2h11v7c0 6-11 6-11 0z"/><path class="lk2" d="M6 4H1c0 5 2 7 5 8M17 4h5c0 5-2 7-5 8M10 14v5M13 14v5"/><path class="bl" d="M6 1h11v3H6zM6 19h11v3H6z"/></svg>
        <svg viewBox="0 0 23 23"><path class="w" d="M3 0h11l6 6v17H3z"/><path class="lk2" d="M14 0v6h6"/><path fill="#333" d="M6 14h3v7H6zM10.500 17h3v4h-3zM15 11h3v10h-3z"/></svg>

        <svg viewBox="0 0 23 23"><path class="w" d="M2 4h21v16H2z"/><text x="5" y="16" class="n" textLength="16">123</text><path d="M3 0h6L6 5h3L1 15l2-7H0z" fill="#fcc060" stroke="#e07b1a"/></svg>
        <svg viewBox="0 0 23 23"><path d="M2 2h20v20H2z" fill="#8cc2ee" stroke="#1565b0" stroke-width="1.300"/><path d="M14 3h7v5l-4 2-2 6-6 1-2 5H4v-8l6-4z" fill="#fff"/><path d="M0 0h8v7l-4 6-4-6z" fill="#e07b1a"/><circle cx="4" cy="4" r="1.500" fill="#fff"/><circle cx="20" cy="20" r="3.500" fill="#e07b1a" stroke="#fff"/><circle cx="22" cy="13" r="1.800" fill="#e07b1a"/></svg>
        <svg viewBox="0 0 23 23"><path d="M7.500 1.500L.8 11.500l6.700 10h3l2-2.500 2 2.500h2l6-10-6-10h-2l-2 2.500-2-2.500zM5 5.500l5 6-5 6M10 11.500l5-7 5 7-5 7zM12.500 8l5 7M17.500 8l-5 7M12.500 4l-3 4M12.500 19l-3-4" fill="none" stroke="#8f3a9c" stroke-width="1.200"/></svg>
        <svg viewBox="0 0 23 23"><path d="M1 2h15l7 9-7 9H1l7-9zM16 2L4 20M19 6L9 20M8 11l6-6" fill="none" stroke="#1b80d8" stroke-width="1.400"/></svg>
        <svg viewBox="0 0 23 23"><g fill="#333"><circle cx="3" cy="9" r="1.200"/><circle cx="11" cy="9" r="1.200"/><circle cx="19" cy="9" r="1.200"/></g></svg>
      </div>
      <div class="wells">
        <div class="lbl l1">Values</div>
        <div class="drop">Add data fields here</div>
        <div class="lbl l2">Drill through</div>
        <div class="opt"><span>Cross-report</span><div class="tog"><i></i>Off</div></div>
        <div class="opt"><span>Keep all filters</span><div class="tog act">On<i></i></div></div>
        <div class="drop d2">Add drill-through fields here</div>
      </div>
    </aside>
    <aside class="data">
      <div class="ph"><span>Data</span><svg width="16" height="18" viewBox="0 0 16 18" fill="none" stroke="#222" stroke-width="1.300"><path d="M1 1l7 8-7 8M8 1l7 8-7 8"/></svg></div>
      <div class="search"><svg width="19" height="19" viewBox="0 0 19 19" fill="none" stroke="#333" stroke-width="1.400"><circle cx="12" cy="7" r="5.800"/><path d="M8 11.500L1 18.500"/></svg><span>Search</span></div>
      <div class="tree"><svg width="9" height="15" viewBox="0 0 9 15" fill="none" stroke="#555" stroke-width="1.200"><path d="M1 1l7 6.500L1 14"/></svg><svg class="ti" width="17" height="15" viewBox="0 0 17 15" fill="none" stroke="#333" stroke-width="1.300"><path d="M1 1h15v13H1zM1 3h15M1 6.500h15M1 10.500h15M6 3v11M11 3v11"/></svg><span>Financial sample</span></div>
    </aside>
  </div>
  <footer class="status">
    <span class="pg">Page 1 of 1</span>
    <div class="zm"><svg width="156" height="16" viewBox="1643 952 156 16" stroke="#605e5c" fill="none"><path d="M1644 960.500h5.500M1787 960.500h10M1792 955.500v10" stroke-width="1.800"/><path d="M1655 959.500h125"/><path d="M1706.500 953v13" stroke-width="5"/><path d="M1718 956v7" stroke-width="2"/></svg><span>83%</span><svg width="20" height="16" viewBox="0 0 20 16" fill="none" stroke="#605e5c" stroke-width="1.300"><path d="M.7.7h18.600v14.600H.7z"/><path d="M3.500 6V3.500H7M13 3.500h3.500V6M16.500 10v2.500H13M7 12.500H3.500V10"/></svg></div>
  </footer>
</div>
</body>
</html>
```
FILE: styles.css
```css
* { box-sizing: border-box; }
body { margin: 0; font-family: "Open Sans", "Noto Sans", sans-serif; color: #252423; background: #f3f2f1; }
svg { display: block; flex: none; }
.app { width: 1910px; height: 970px; display: flex; flex-direction: column; overflow: hidden; }

/* ribbon */
.ribbon { height: 154px; background: #fafafa; position: relative; z-index: 2; box-shadow: 0 1px 6px rgba(0,0,0,.22); display: flex; flex-direction: column; }
.tabs { display: flex; height: 42px; padding-left: 18px; }
.tab { height: 36px; line-height: 34px; font-size: 16.500px; letter-spacing: -.05px; color: #252423; white-space: nowrap; }
.tab.on { font-weight: 600; border-bottom: 3px solid #117865; height: 35px; }
.t-file { width: 73px; } .t-home { width: 48px; margin-right: 39px; letter-spacing: -.2px; } .t-insert { width: 83px; } .t-model { width: 114px; } .t-view { width: 75px; } .t-opt { width: 110px; }
.groups { display: flex; height: 110px; }
.group { border-right: 1px solid #d2d0ce; display: flex; flex-direction: column; height: 110px; }
.g-clip { width: 191px; } .g-data { width: 476px; padding-left: 9px; } .g-query { width: 145px; padding-left: 12px; } .g-insert { width: 184px; padding-left: 10px; } .g-calc { width: 143px; padding-left: 10px; } .g-sens { width: 91px; padding-left: 8px; } .g-share { width: 74px; }
.tools { display: flex; height: 96px; padding-top: 5px; }
.btn { display: flex; flex-direction: column; align-items: center; font-size: 14px; letter-spacing: 0; line-height: 20px; text-align: center; white-space: nowrap; }
.btn span { margin-top: 4px; display: block; width: 110px; margin-left: -20px; margin-right: -20px; }
.w48 { width: 48px; } .w50 { width: 50px; } .w52 { width: 52px; } .w58 { width: 58px; } .w61 { width: 61px; letter-spacing: -.2px; } .w62 { width: 62px; } .w66 { width: 66px; letter-spacing: -.2px; } .w68 { width: 68px; } .w70 { width: 70px; } .w74 { width: 74px; } .w98 { width: 98px; }
.w-paste { width: 50px; padding-left: 4px; }
.w-paste span { margin-left: -26px; }
.off { color: #c8c6c4; }
.dn { display: inline-block; width: 5px; height: 5px; border: solid #333; border-width: 0 1.8px 1.8px 0; transform: rotate(45deg); margin: 0 1px 3px 3px; }
.dn.lone { border-color: #b5b3b1; margin: 0 0 3px 0; }
.minis { display: flex; flex-direction: column; padding-left: 5px; font-size: 14px; letter-spacing: 0; }
.mini { display: flex; gap: 5px; height: 30px; align-items: flex-start; line-height: 19px; }
.gl { text-align: center; font-size: 12px; line-height: 14px; letter-spacing: -.05px; color: #3b3a39; padding-right: 1px; white-space: nowrap; }
.g-clip .gl { padding-right: 10px; }
.g-data .gl { margin-left: -9px; } .g-query .gl { margin-left: -12px; } .g-insert .gl, .g-calc .gl { margin-left: -10px; } .g-sens .gl { margin-left: -8px; }
.collapse { margin-left: auto; padding: 97px 6px 0 0; }

/* main area */
.main { display: flex; height: 789px; }
.left { width: 1458px; display: flex; flex-direction: column; }
.workrow { display: flex; height: 746px; }
.rail { width: 40px; display: flex; flex-direction: column; padding: 16px 0 0 5px; gap: 29px; }
.rail svg:last-child { margin-left: -1px; }
.canvas { width: 1378px; padding-left: 25px; background: linear-gradient(90deg, #9fa0d0 0, #9fa0d0 12px, #a6aace 24px, #bba7cc 26px, #bba7cc 1353px, #a6aace 1355px, #9fa0d0 1367px); overflow: hidden; }
.head { height: 90px; display: flex; padding-top: 4px; padding-left: 55px; }
.ttl { font: bold 46px "Liberation Serif", serif; fill: #0b1150; }
.slicer { margin-left: 46px; width: 371px; }
.sl-h { text-align: center; font: 16.500px/20px Roboto, sans-serif; color: #333; height: 36px; padding: 10px 3px 0 0; }
.sl-b { display: flex; gap: 2px; }
.sl-b b { flex: 1; height: 43px; background: #333; border: 1px solid #6d6470; color: #fff; font-size: 13px; letter-spacing: -.25px; line-height: 41px; text-align: center; }
.row { display: flex; align-items: flex-start; }
.row1 { height: 151px; } .row2 { height: 235px; } .row3 { height: 270px; }
.card { border: 1px solid rgba(255,255,255,.82); border-radius: 25px; flex: none; }
.card > svg { overflow: visible; }
.card h3 { margin: 0; height: 32px; padding-top: 9px; text-align: center; font: bold 18px/20px "Liberation Serif", serif; letter-spacing: .55px; color: #252423; white-space: nowrap; }
.row1 .card h3 { padding-top: 10px; }
.card h3.blk { color: #000; }
.c1 { width: 204px; height: 149px; margin: 2px 8px 0 0; }
.c2 { width: 205px; height: 151px; margin: 2px 8px 0 0; }
.c3 { width: 209px; height: 149px; margin: 2px 8px 0 0; }
.c4 { width: 274px; height: 151px; margin: 2px 8px 0 0; }
.c5 { width: 402px; height: 151px; }
.d1 { width: 382px; height: 232px; margin: 3px 1px 0 0; }
.d2 { width: 366px; height: 230px; margin-top: 5px; }
.d3 { width: 313px; height: 232px; margin-right: 1px; }
.d4 { width: 263px; height: 235px; }
.e1 { width: 364px; height: 260px; margin-top: 9px; }
.e2 { width: 590px; height: 269px; margin-right: 1px; }
.e3 { width: 371px; height: 269px; }
.big { font: 400 56px Roboto, sans-serif; letter-spacing: 5px; fill: #141414; stroke: #141414; stroke-width: .7px; }
.big.blk { fill: #000; stroke: #000; }

/* table visual */
.tblwrap { display: flex; padding: 2px 0 0 14px; }
.tbl { width: 365px; height: 94px; overflow: hidden; border-top: 2px solid #8d8492; background: #141414; }
.tr { display: grid; grid-template-columns: 45px 77px 37px 59px 66px 81px; font-size: 13px; letter-spacing: 0; color: #fff; white-space: nowrap; }
.tr span { border-right: 1px solid rgba(255,255,255,.16); padding: 0 4px 0 5px; }
.tr span:last-child { border-right: 0; padding-right: 0; }
.tr .r { text-align: right; padding-left: 0; }
.tr .cut { text-align: right; }
.tr span:nth-child(4) { padding-left: 4px; padding-right: 0; }
.th { height: 35px; line-height: 26px; border-bottom: 2px solid #bdbdbd; }
.th .nb { letter-spacing: -.15px; }
.sort { display: block; border: 5px solid transparent; border-top: 6px solid #fff; border-bottom: 0; width: 0; margin-top: -3px; }
.td { height: 24px; line-height: 25px; background: #4d4d4d; }
.gap { height: 9px; background: #c4c3c4; }
.tt { height: 24px; font: bold 15px/22px "Liberation Serif", serif; border-top: 1px solid #8a8a8a; }
.vbar { width: 7px; margin-left: 1px; background: #dfd2e4; border-radius: 4px; }
.vbar i { display: block; height: 10px; background: #918194; border-radius: 4px; }
.hbar { margin: 1px 0 0 15px; width: 364px; height: 8px; background: #dfd2e4; border-radius: 4px; }
.hbar i { display: block; width: 260px; height: 8px; background: #918194; border-radius: 4px; }

/* chart text */
.ax text { font-size: 12px; fill: #3a3540; }
.grid { stroke: #cdb9cf; stroke-width: 1.300; stroke-dasharray: 1.500 4.800; fill: none; }
.mo text { fill: #1d1a20; }
.pl text { font-size: 12.300px; font-weight: 600; fill: #3f3943; }
.pl .lg text { font-size: 13.500px; font-weight: 400; fill: #2d2831; }
.pl.dk text { fill: #0a0a0a; }
.pl.dk .lg text { fill: #1a1a1a; }
.pl .lg text.b { font-weight: 700; fill: #000; font-size: 13px; }
.lead { fill: none; stroke: #7b6a83; stroke-width: 1; }
.mono text { font: bold 14px "DejaVu Sans Mono", monospace; fill: #0a0a0a; }
.mono .val { font: italic bold 30.500px "DejaVu Sans Mono", monospace; }
.seg text { font-size: 12px; font-weight: 700; font-style: italic; fill: #000; }
.map { margin: 4px 0 0 15px; }
.card > .map { overflow: hidden; }
.mp text { font-size: 12px; font-weight: 700; fill: #fff; }
.mp .oc text { fill: #b9c9d6; font-size: 12.500px; }
.bing { font-size: 9px; font-weight: 600; fill: #fff; }
.cr text { font: 10px "Liberation Sans", sans-serif; fill: #f0f0f0; text-shadow: 1px 1px 1px #000; }
.cr .lk { fill: #aebcf5; text-decoration: underline; }

/* filters strip */
.filters { width: 40px; background: #fff; padding: 15px 0 0 12px; border-left: 1px solid #c8c6c4; }
.filters .fn { margin: 18px 0 0 4px; }
.filters span { writing-mode: vertical-rl; font-size: 17.500px; line-height: 20px; font-weight: 600; letter-spacing: 0; margin: 10px 0 0 -3px; display: block; }

/* page tabs */
.pages { height: 43px; display: flex; align-items: flex-start; }
.dev { margin-left: 53px; width: 30px; height: 39px; padding: 9px 0 0 2px; border-bottom: 4px solid #117865; border-radius: 2px; }
.phone { margin: 6px 0 0 32px; }
.arrows { margin: 15px 0 0 25px; }
.ptab { margin-left: 7px; width: 95px; height: 43px; background: #fff; border: 1px solid #a8a6a4; border-width: 0 1px; box-shadow: inset 0 -4px #117865; text-align: center; font-size: 15px; letter-spacing: -.2px; line-height: 42px; }
.padd { width: 49px; height: 40px; margin-top: 2px; background: #117865; display: flex; justify-content: center; align-items: center; }

/* side panes */
.viz { width: 226px; border-left: 1px solid #dddbd9; }
.data { width: 226px; border-left: 1px solid #dddbd9; }
.ph { display: flex; justify-content: space-between; padding: 12px 10px 0 10px; height: 51px; font-size: 18px; font-weight: 600; letter-spacing: -.1px; line-height: 26px; }
.ph .tv { font-size: 18.500px; letter-spacing: 0; }
.ph svg { margin-top: 4px; }
.bv { height: 21px; margin-top: -2px; padding: 0 0 0 10px; font-size: 14px; font-weight: 500; line-height: 17px; letter-spacing: .05px; }
.modes { display: flex; padding-left: 10px; height: 46px; margin-top: 1px; }
.tile { width: 40px; height: 40px; background: #d0cecd; border-radius: 2px; padding: 4px 0 0 5px; }
.brush { margin: 5px 0 0 48px; }
.notch { margin-top: -2px; }
.icons { display: grid; grid-template-columns: repeat(6, 35px); grid-auto-rows: 35px; padding: 13px 0 0 14px; height: 258px; border-bottom: 1px solid #dddbd9; }
.icons svg { width: 23px; height: 23px; overflow: visible; fill: none; }
.k { stroke: #333; stroke-width: 1.500; fill: none; }
.w { stroke: #555; stroke-width: 1.300; fill: #fdfdfd; }
.g { stroke: #777; stroke-width: 1.200; fill: #c8c6c4; }
.bl { stroke: #1668ad; stroke-width: 1.300; fill: #83beec; }
.lb { stroke: #1b80c8; stroke-width: 1.500; }
.lk2 { stroke: #444; stroke-width: 1.300; fill: none; }
.n { font-size: 10px; fill: #3a8fd0; }
.rp { font-size: 19px; font-weight: 700; fill: #2683c0; }
.wells { font-size: 14px; letter-spacing: .12px; }
.lbl { padding-left: 15px; line-height: 18px; }
.l1 { margin-top: 11px; } .l2 { margin-top: 15px; font-weight: 500; color: #484644; margin-bottom: 5px; letter-spacing: .1px; }
.drop { margin: 7px 0 0 5px; width: 214px; height: 35px; background: #fff; border: 1px dashed #c0bebc; border-radius: 2px; padding-left: 13px; line-height: 34px; white-space: nowrap; }
.drop.d2 { height: 32px; padding-left: 10px; margin-top: 6px; line-height: 31px; letter-spacing: .14px; }
.opt { display: flex; justify-content: space-between; align-items: center; height: 34px; padding: 0 27px 0 15px; }
.tog { width: 40px; height: 20px; border: 1px solid #7a7876; border-radius: 10px; background: #fff; display: flex; align-items: center; gap: 3px; padding-left: 5px; font-size: 11px; letter-spacing: -.1px; color: #605e5c; }
.tog i { width: 10px; height: 10px; border-radius: 5px; background: #605e5c; }
.tog.act { background: #117865; border-color: #117865; color: #fff; }
.tog.act i { background: #fff; }
.search { margin: 6px 5px 0 5px; height: 33px; background: #fff; border: 1px solid #605e5c; border-radius: 2px; display: flex; align-items: center; gap: 8px; padding-left: 9px; font-size: 16.500px; letter-spacing: -.2px; color: #605e5c; }
.tree { display: flex; align-items: center; height: 20px; margin-top: 15px; padding-left: 11px; font-size: 14px; letter-spacing: .05px; color: #3b3a39; }
.ti { margin: 0 8px 0 7px; }
.status { height: 27px; border-top: 1px solid #dfdedc; display: flex; justify-content: space-between; align-items: center; color: #605e5c; font-size: 14.500px; }
.pg { margin-left: -4px; letter-spacing: 0; padding-top: 2px; }
.zm { display: flex; align-items: center; padding-top: 3px; padding-right: 24px; }
.zm span { margin: 0 19px 0 20px; letter-spacing: -.5px; width: 28px; }
```
